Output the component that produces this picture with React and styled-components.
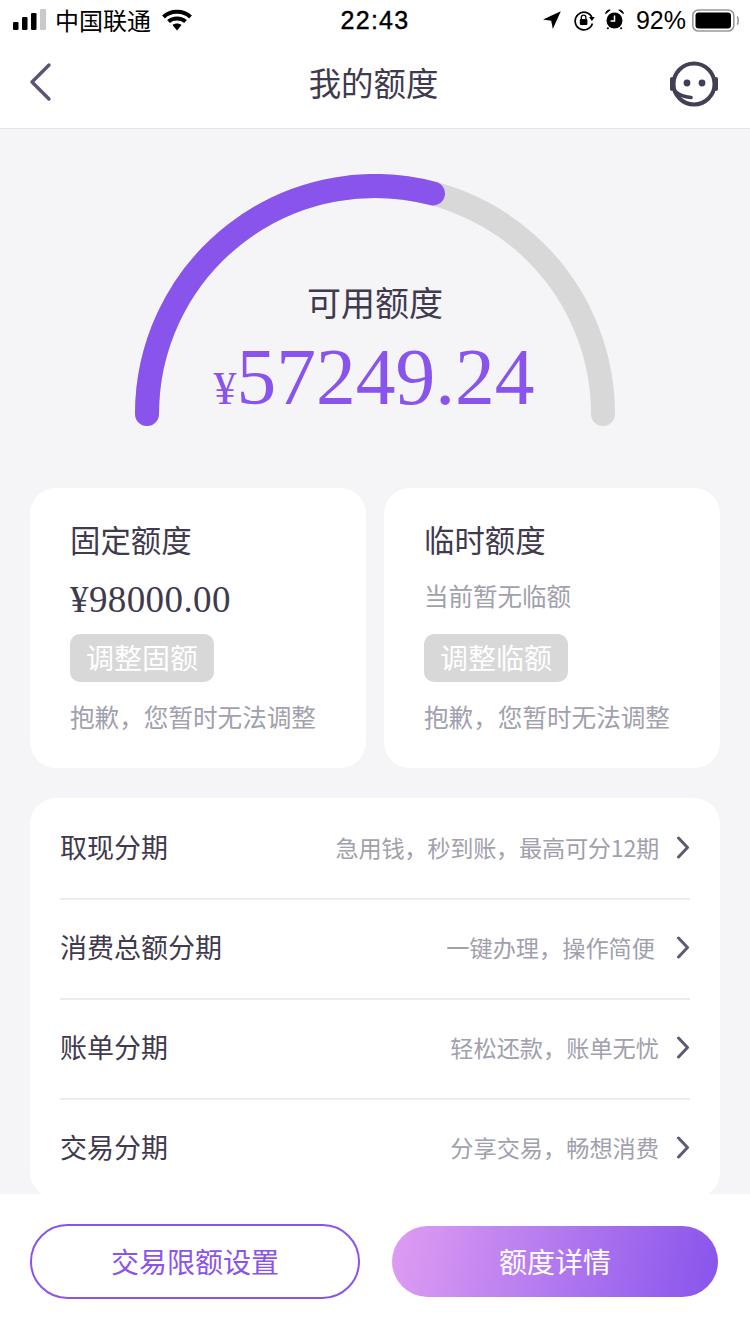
import React from 'react'
import styled, { createGlobalStyle } from 'styled-components'

const GlobalStyle = createGlobalStyle`
  html, body {
    margin: 0;
    padding: 0;
    background: #fff;
  }
  * {
    box-sizing: border-box;
  }
`

const rows = [
  { title: '取现分期', hint: '急用钱，秒到账，最高可分12期', hintEnd: 0, tight: true },
  { title: '消费总额分期', hint: '一键办理，操作简便', hintEnd: 4 },
  { title: '账单分期', hint: '轻松还款，账单无忧', hintEnd: 0 },
  { title: '交易分期', hint: '分享交易，畅想消费', hintEnd: 0 }
]

const cards = [
  { title: '固定额度', amount: '¥98000.00', action: '调整固额' },
  { title: '临时额度', note: '当前暂无临额', action: '调整临额' }
]

function StatusIcons() {
  return (
    <StatusRight>
      <svg width="18" height="18" viewBox="0 0 18 18">
        <path d="M17.8 .2 L0 8.6 L8.2 9.8 L9.8 18 Z" fill="#000" />
      </svg>
      <svg width="22" height="22" viewBox="0 0 22 22" fill="none">
        <path d="M18.8 8 A8.8 8.8 0 1 0 19.4 14.5" stroke="#000" strokeWidth="1.7" />
        <path d="M16 8 L21.8 8 L18.9 12 Z" fill="#000" />
        <rect x="6.8" y="10" width="7.6" height="6" rx="1" fill="#000" />
        <path d="M8.3 10 V8.4 A2.3 2.3 0 0 1 12.9 8.4 V10" stroke="#000" strokeWidth="1.3" />
      </svg>
      <svg width="21" height="22" viewBox="0 0 21 22" fill="none">
        <circle cx="9.5" cy="11.5" r="8" fill="#000" />
        <path d="M9.5 6.5 V12 H5.5" stroke="#fff" strokeWidth="1.5" />
        <path d="M.6 4.6 C1 2 3 .8 5.2 1 Z M18.4 4.6 C18 2 16 .8 13.8 1 Z" fill="#000" stroke="#000" strokeWidth="1" />
        <path d="M3.5 18.5 L2.3 20 M15.5 18.5 L16.7 20" stroke="#000" strokeWidth="1.8" />
      </svg>
      <BatteryText>92%</BatteryText>
      <svg width="48" height="24" viewBox="0 0 48 24" fill="none">
        <rect x="1.8" y="2" width="41" height="21" rx="5.5" stroke="#999" strokeWidth="1.6" />
        <rect x="4.5" y="4.5" width="35.5" height="16" rx="3.2" fill="#000" />
        <path d="M46 8.5 C47.6 9.5 47.6 15.5 46 16.5" stroke="#999" strokeWidth="1.6" />
      </svg>
    </StatusRight>
  )
}

function Chevron() {
  return (
    <svg width="14" height="23" viewBox="0 0 14 23" fill="none">
      <path
        d="M2.5 2 L11.5 11.5 L2.5 21"
        stroke="#5f5a70"
        strokeWidth="3"
        strokeLinecap="round"
        strokeLinejoin="round"
      />
    </svg>
  )
}

export default function App() {
  return (
    <Page>
      <GlobalStyle />
      <StatusBar>
        <StatusLeft>
          <svg width="34" height="22" viewBox="0 0 34 22">
            <rect x="0" y="13" width="5.5" height="8" rx="1.2" fill="#000" />
            <rect x="9" y="8" width="5.5" height="13" rx="1.2" fill="#000" />
            <rect x="18" y="4" width="5.5" height="17" rx="1.2" fill="#000" />
            <rect x="27" y="0" width="6" height="21" rx="1.2" fill="#c9c9c9" />
          </svg>
          <Carrier>中国联通</Carrier>
          <svg width="30" height="22" viewBox="0 0 30 22" fill="none">
            <path d="M1.5 8 C8.5 1 21.5 1 28.5 8" stroke="#000" strokeWidth="4" />
            <path d="M6.5 12.5 C11 8.5 19 8.5 23.5 12.5" stroke="#000" strokeWidth="4" />
            <path d="M10.5 16 C13 14 17 14 19.5 16 L15 21.5 Z" fill="#000" />
          </svg>
        </StatusLeft>
        <Clock>22:43</Clock>
        <StatusIcons />
      </StatusBar>

      <NavBar>
        <svg width="24" height="40" viewBox="0 0 24 40" fill="none">
          <path
            d="M21 3 L4 20 L21 37"
            stroke="#5c5470"
            strokeWidth="3.4"
            strokeLinecap="round"
            strokeLinejoin="round"
          />
        </svg>
        <NavTitle>我的额度</NavTitle>
        <NavAction>
          <svg width="50" height="46" viewBox="0 0 50 46" fill="none">
            <circle cx="25" cy="23" r="20.5" stroke="#453f55" strokeWidth="4" />
            <rect x="1" y="16" width="4" height="14" rx="2" fill="#453f55" />
            <rect x="45" y="16" width="4" height="14" rx="2" fill="#453f55" />
            <circle cx="18" cy="22" r="3.4" fill="#453f55" />
            <circle cx="33" cy="22" r="3.4" fill="#453f55" />
            <path d="M7 31 C11 35 16 36 22 36.5" stroke="#453f55" strokeWidth="3.6" strokeLinecap="round" />
          </svg>
        </NavAction>
      </NavBar>

      <Content>
        <Gauge>
          <GaugeArc width="480" height="252" viewBox="0 0 480 252" fill="none">
            <path
              d="M12 240 A228 228 0 0 1 468 240"
              stroke="#d8d8d8"
              strokeWidth="24"
              strokeLinecap="round"
            />
            <path
              d="M12 240 A228 228 0 0 1 298 19.5"
              stroke="#8854ec"
              strokeWidth="24"
              strokeLinecap="round"
            />
          </GaugeArc>
          <GaugeLabel>可用额度</GaugeLabel>
          <GaugeAmount>
            <small>¥</small>57249.24
          </GaugeAmount>
        </Gauge>

        <Cards>
          {cards.map((card) => (
            <Card key={card.title}>
              <CardTitle>{card.title}</CardTitle>
              {card.amount ? (
                <CardAmount>{card.amount}</CardAmount>
              ) : (
                <CardNote>{card.note}</CardNote>
              )}
              <AdjustButton>{card.action}</AdjustButton>
              <CardHint>抱歉，您暂时无法调整</CardHint>
            </Card>
          ))}
        </Cards>

        <List>
          {rows.map((row) => (
            <Row key={row.title}>
              <RowTitle>{row.title}</RowTitle>
              <RowHint $end={row.hintEnd} $tight={row.tight}>
                {row.hint}
              </RowHint>
              <Chevron />
            </Row>
          ))}
        </List>
      </Content>

      <Footer>
        <OutlineButton>交易限额设置</OutlineButton>
        <GradientButton>额度详情</GradientButton>
      </Footer>
    </Page>
  )
}

const cjk = `"Noto Sans CJK SC", "Liberation Sans", sans-serif`

const Page = styled.div`
  width: 750px;
  height: 1334px;
  display: flex;
  flex-direction: column;
  overflow: hidden;
  background: #fff;
  font-family: ${cjk};
  color: #3f3a4d;
`

const StatusBar = styled.div`
  height: 40px;
  flex: none;
  display: grid;
  grid-template-columns: 1fr auto 1fr;
  align-items: center;
  padding: 0 11px 0 13px;
  color: #000;
`

const StatusLeft = styled.div`
  display: flex;
  align-items: center;
`

const Carrier = styled.span`
  margin: 0 11px 0 8px;
  font-size: 24px;
  line-height: 40px;
`

const Clock = styled.span`
  font-family: "Liberation Sans", sans-serif;
  font-size: 25px;
  font-weight: 500;
  letter-spacing: 1.3px;
  margin-left: -2px;
  -webkit-text-stroke: 0.4px #000;
`

const StatusRight = styled.div`
  display: flex;
  align-items: center;
  justify-content: flex-end;
  gap: 10px;

  svg:first-child {
    margin-right: 2px;
  }
`

const BatteryText = styled.span`
  font-family: "Liberation Sans", sans-serif;
  font-size: 25px;
  margin: 0 -5px 0 0;
`

const NavBar = styled.div`
  height: 89px;
  flex: none;
  display: grid;
  grid-template-columns: 1fr auto 1fr;
  align-items: center;
  padding: 0 31px 5px 28px;
  border-bottom: 1px solid #e4e4e6;
`

const NavTitle = styled.h1`
  margin: 0;
  font-size: 32.4px;
  font-weight: 400;
  line-height: 46px;
  color: #3f3a4d;
`

const NavAction = styled.div`
  display: flex;
  justify-content: flex-end;
  margin-bottom: -4px;
`

const Content = styled.div`
  flex: 1;
  min-height: 0;
  overflow: hidden;
  background: #f5f5f8;
  padding: 0 30px;
`

const Gauge = styled.div`
  position: relative;
  width: 480px;
  height: 359px;
  margin: 0 auto;
  padding-top: 148px;
  text-align: center;
`

const GaugeArc = styled.svg`
  position: absolute;
  left: 0;
  top: 45px;
`

const GaugeLabel = styled.div`
  font-size: 34px;
  line-height: 50px;
  color: #3f3a4d;
`

const GaugeAmount = styled.div`
  font-family: "Liberation Serif", serif;
  font-size: 79.5px;
  line-height: 92px;
  margin: 4px 0 0 -2px;
  color: #8854ec;

  small {
    font-size: 46px;
  }
`

const Cards = styled.div`
  display: grid;
  grid-template-columns: 336px 336px;
  gap: 18px;
`

const Card = styled.div`
  height: 280px;
  padding: 28px 40px 0;
  background: #fff;
  border-radius: 26px;
`

const CardTitle = styled.div`
  font-size: 30.4px;
  line-height: 46px;
  color: #3f3a4d;
`

const CardAmount = styled.div`
  font-family: "Liberation Serif", serif;
  font-size: 37px;
  line-height: 48px;
  letter-spacing: 0.4px;
  margin-top: 14px;
  color: #3f3a4d;
`

const CardNote = styled.div`
  font-size: 24.5px;
  line-height: 48px;
  margin-top: 10px;
  height: 52px;
  color: #a1a0ad;
`

const AdjustButton = styled.div`
  width: 144px;
  height: 48px;
  margin-top: 10px;
  border-radius: 10px;
  background: #d8d8d8;
  color: #fff;
  font-size: 28px;
  line-height: 46px;
  text-align: center;
`

const CardHint = styled.div`
  font-size: 24.6px;
  line-height: 36px;
  margin-top: 16px;
  white-space: nowrap;
  color: #a1a0ad;
`

const List = styled.div`
  margin-top: 30px;
  background: #fff;
  border-radius: 26px;
  padding: 0 30px;
`

const Row = styled.div`
  height: 100px;
  display: flex;
  align-items: center;
  padding-bottom: 2px;
  box-shadow: 0 2px 0 #ececf0;

  &:last-child {
    box-shadow: none;
  }
`

const RowTitle = styled.div`
  flex: 1;
  margin-bottom: 2px;
  font-size: 27px;
  color: #3f3a4d;
`

const RowHint = styled.div`
  margin-right: ${(p) => 17 + p.$end}px;
  font-size: 23.2px;
  letter-spacing: ${(p) => (p.$tight ? '-0.25px' : '0')};
  color: #a1a0ad;
`

const Footer = styled.div`
  height: 140px;
  flex: none;
  display: flex;
  align-items: center;
  gap: 32px;
  padding: 0 32px 6px 30px;
  background: #fff;
`

const OutlineButton = styled.div`
  width: 330px;
  height: 75px;
  border: 2px solid #8854ec;
  border-radius: 38px;
  color: #8854ec;
  font-size: 28px;
  line-height: 71px;
  text-align: center;
`

const GradientButton = styled.div`
  width: 326px;
  height: 71px;
  border-radius: 36px;
  background: linear-gradient(100deg, #de9df2 0%, #8854ec 100%);
  color: #fff;
  font-size: 28px;
  line-height: 71px;
  text-align: center;
`
